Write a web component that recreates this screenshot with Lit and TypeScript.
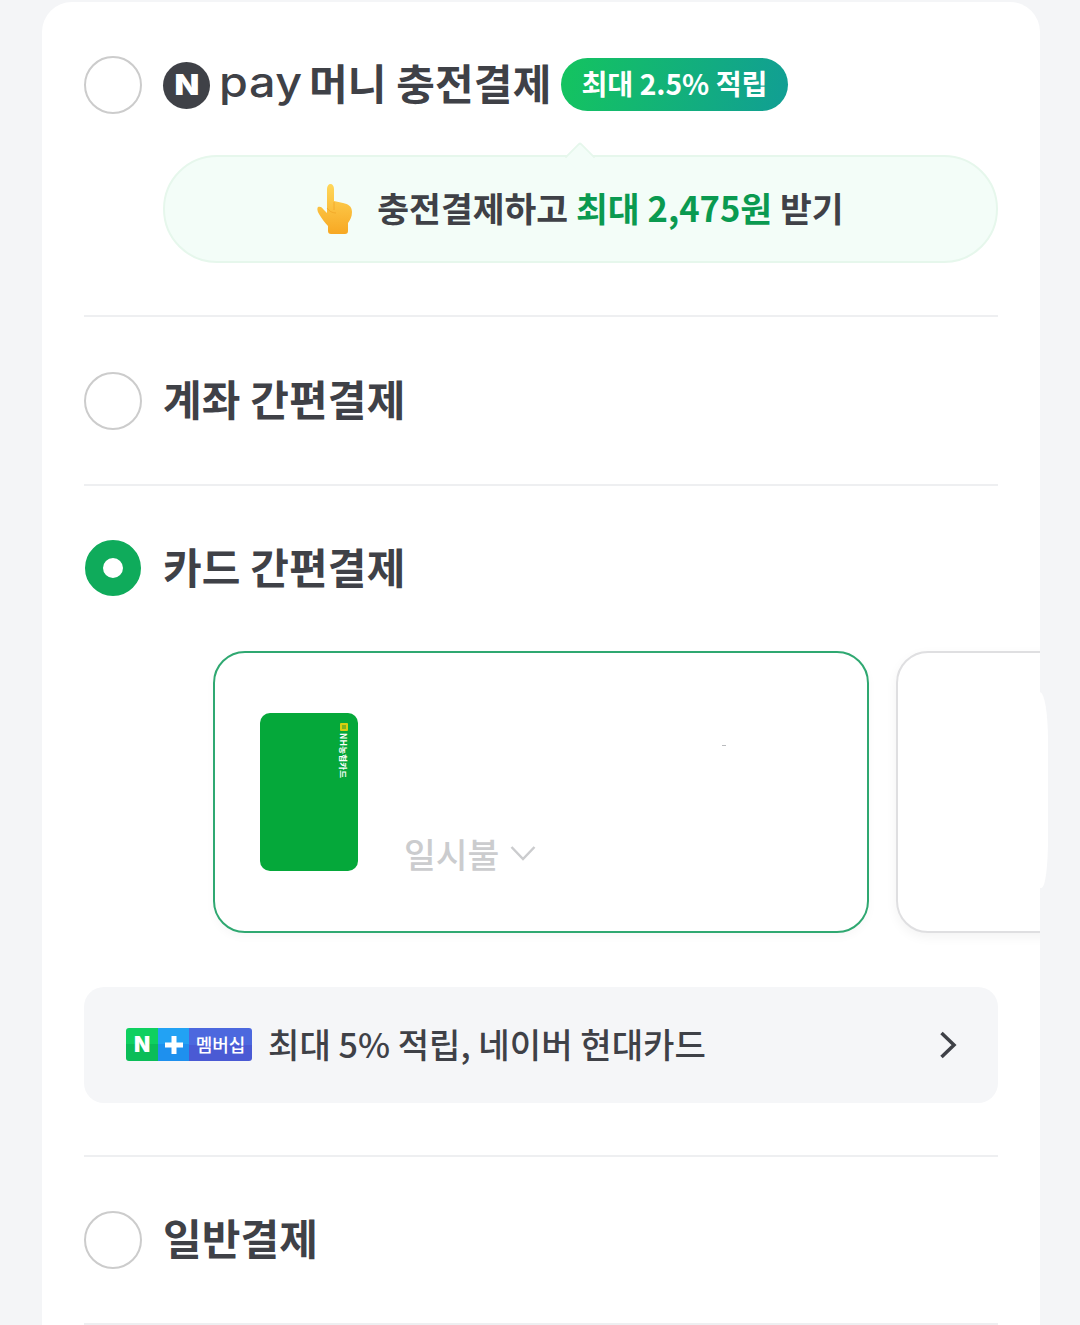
import { LitElement, html, css } from "lit";
import { customElement } from "lit/decorators.js";

@customElement("app-root")
export class AppRoot extends LitElement {
  static styles = css`
    :host {
      display: block;
      position: relative;
      background: #f4f5f7;
      height: 1325px;
      overflow: hidden;
      font-family: "Noto Sans CJK KR", "Noto Sans", sans-serif;
      color: #3f4147;
    }
    .sheet {
      margin: 2px 40px 0 42px;
      padding: 0 42px;
      background: #fff;
      border-radius: 30px 30px 0 0;
      height: 1400px;
      overflow: hidden;
    }
    .blob {
      position: absolute;
      left: 1040px;
      top: 692px;
      width: 8px;
      height: 196px;
      background: #fff;
      border-radius: 0 10px 8px 0 / 0 60px 60px 0;
    }
    .section {
      padding: 54px 0;
      border-bottom: 2px solid #eeeff1;
    }
    .section.first { padding-bottom: 52px; }
    .section.second { padding-top: 55px; }
    .section.cards { padding-bottom: 52px; }
    .row {
      display: flex;
      align-items: center;
      gap: 21px;
      height: 58px;
    }
    .radio {
      flex: none;
      box-sizing: border-box;
      width: 58px;
      height: 58px;
      border-radius: 50%;
      border: 2.5px solid #cccccc;
      background: #fff;
    }
    .radio.on {
      border: 18px solid #0fab5b;
      width: 56px;
      height: 56px;
      margin: 0 1px;
      align-self: flex-start;
    }
    .title {
      font-size: 42px;
      font-weight: 700;
      line-height: 52px;
      padding-bottom: 6px;
      letter-spacing: 0.15px;
      white-space: nowrap;
    }
    .brand { display: flex; align-items: center; }
    .n-logo {
      flex: none;
      width: 47px;
      height: 47px;
      border-radius: 50%;
      background: #3f4147;
      color: #fff;
      display: flex;
      align-items: center;
      justify-content: center;
      font: 900 28px/47px Inter, sans-serif;
      margin-right: 9px;
    }
    .n-logo span { display: block; transform: scaleX(1.15); }
    .pay {
      font: 500 41px/52px Inter, sans-serif;
      letter-spacing: 0.5px;
      width: 71px;
      margin-right: 19px;
      padding-bottom: 6px;
      transform: scaleX(1.14);
      transform-origin: left center;
    }
    .badge {
      flex: none;
      margin-left: -11px;
      height: 53px;
      padding: 0 20px;
      border-radius: 27px;
      background: linear-gradient(100deg, #14c45f, #119e94);
      color: #fff;
      font-size: 28.2px;
      font-weight: 700;
      line-height: 50px;
      white-space: nowrap;
      margin-top: -2px;
    }
    .bubble {
      position: relative;
      box-sizing: border-box;
      height: 108px;
      margin: 41px 0 0 79px;
      border: 2px solid #e6f7ec;
      border-radius: 54px;
      background: #f3fdf8;
      display: flex;
      align-items: center;
      justify-content: center;
      gap: 24px;
      font-size: 34.6px;
      font-weight: 700;
      line-height: 44px;
      white-space: nowrap;
    }
    .bubble-text { padding-bottom: 5px; }
    .tail {
      position: absolute;
      left: 404px;
      top: -11px;
      width: 20px;
      height: 20px;
      background: #f3fdf8;
      border-top: 2px solid #e6f7ec;
      border-left: 2px solid #e6f7ec;
      transform: rotate(45deg);
      border-radius: 3px 0 0 0;
    }
    .hand { flex: none; display: block; }
    .hl { color: #0a9a50; }
    .carousel {
      display: flex;
      gap: 27px;
      margin: 53px -42px 0 129px;
    }
    .pay-card {
      flex: none;
      position: relative;
      box-sizing: border-box;
      width: 656px;
      height: 282px;
      border-radius: 32px;
      border: 2px solid #2fa871;
      background: #fff;
      display: flex;
      align-items: flex-end;
      gap: 46px;
      padding: 0 0 60px 45px;
      box-shadow: 0 4px 10px rgba(0, 0, 0, 0.03);
    }
    .pay-card.next {
      border-color: #dfdfe1;
      box-shadow: 0 4px 12px rgba(0, 0, 0, 0.05);
    }
    .speck {
      position: absolute;
      left: 507px;
      top: 92px;
      width: 4px;
      height: 1px;
      background: #b9bbbe;
    }
    .plastic {
      flex: none;
      position: relative;
      width: 98px;
      height: 158px;
      border-radius: 10px;
      background: #05a83a;
    }
    .nh {
      position: absolute;
      top: 10px;
      right: 10px;
      display: flex;
      flex-direction: column;
      align-items: center;
      gap: 2px;
    }
    .nh-mark {
      box-sizing: border-box;
      width: 8px;
      height: 8px;
      background: #7fb51c;
      border: 2px solid #d8cf10;
      border-radius: 1px;
    }
    .nh-text {
      writing-mode: vertical-rl;
      text-orientation: sideways;
      color: #fff;
      font-size: 8.5px;
      line-height: 9px;
      font-weight: 700;
      letter-spacing: 0.2px;
      white-space: nowrap;
    }
    .plan {
      display: flex;
      align-items: center;
      gap: 11px;
      color: #cbccce;
      font-size: 34.6px;
      font-weight: 500;
      line-height: 38px;
      margin-bottom: -1px;
    }
    .banner {
      box-sizing: border-box;
      height: 116px;
      margin-top: 54px;
      border-radius: 20px;
      background: #f5f6f8;
      display: flex;
      align-items: center;
      padding: 0 41px 0 42px;
      font-size: 34.15px;
      font-weight: 500;
      white-space: nowrap;
    }
    .plus {
      flex: none;
      display: flex;
      height: 33px;
      border-radius: 3px;
      overflow: hidden;
      margin-right: 16px;
      margin-top: -1px;
      color: #fff;
      text-align: center;
    }
    .plus > * { display: flex; align-items: center; justify-content: center; height: 33px; }
    .p1 {
      width: 32px;
      background: linear-gradient(#0fd060 50%, #0bbd58 50%);
      font: 900 21px/33px Inter, sans-serif;
    }
    .p2 { width: 31px; background: linear-gradient(#22a2f4 50%, #1e90ee 50%); }
    .p3 {
      width: 63px;
      background: linear-gradient(#4c68de 50%, #4a5ad4 50%);
      font-size: 18px;
      font-weight: 500;
      line-height: 33px;
      padding-bottom: 1px;
    }
    .banner-text { flex: 1; padding-bottom: 5px; }
    .chev { flex: none; display: block; }
  `;

  private radio(on = false) {
    return html`<div class="radio ${on ? "on" : ""}"></div>`;
  }

  render() {
    return html`
      <div class="sheet">
        <div class="section first">
          <div class="row">
            ${this.radio()}
            <div class="brand">
              <div class="n-logo"><span>N</span></div>
              <div class="pay">pay</div>
              <div class="title">머니 충전결제</div>
            </div>
            <div class="badge">최대 2.5% 적립</div>
          </div>
          <div class="bubble">
            <div class="tail"></div>
            <svg class="hand" width="36" height="50" viewBox="0 0 36 50">
              <defs>
                <linearGradient id="h" x1="0" y1="0" x2="0" y2="1">
                  <stop offset="0" stop-color="#ffd75a" />
                  <stop offset="1" stop-color="#f7a823" />
                </linearGradient>
              </defs>
              <path
                fill="url(#h)"
                d="M10 5c0-3 1.500-5 3.500-5S17 2 17 5v12l9 2c5 1 9 3 9 9 0 5-2 8-4 11v8c0 2-1 3-3 3H14c-2 0-3-1-3-3v-5c-3-3-6-7-9-12-2-3-2-6-1-7 2-1 4 0 6 3l3 3z"
              />
              <path fill="none" stroke="#ec9f20" stroke-width="1" stroke-opacity=".6" d="M17 18v8M10 24c2 3 5 5 9 5" />
            </svg>
            <div class="bubble-text">충전결제하고 <span class="hl">최대 2,475원</span> 받기</div>
          </div>
        </div>

        <div class="section second">
          <div class="row">${this.radio()}<div class="title">계좌 간편결제</div></div>
        </div>

        <div class="section cards">
          <div class="row">${this.radio(true)}<div class="title">카드 간편결제</div></div>
          <div class="carousel">
            <div class="pay-card">
              <div class="plastic">
                <div class="nh">
                  <div class="nh-mark"></div>
                  <div class="nh-text">NH농협카드</div>
                </div>
              </div>
              <div class="plan">
                일시불
                <svg width="26" height="16" viewBox="0 0 26 16">
                  <path d="M1.500 2 13 14 24.500 2" fill="none" stroke="#cbccce" stroke-width="2.500" />
                </svg>
              </div>
              <div class="speck"></div>
            </div>
            <div class="pay-card next"></div>
          </div>
          <div class="banner">
            <div class="plus">
              <span class="p1">N</span>
              <span class="p2">
                <svg width="18" height="18" viewBox="0 0 18 18">
                  <path d="M9 0v18M0 9h18" stroke="#fff" stroke-width="5" fill="none" />
                </svg>
              </span>
              <span class="p3">멤버십</span>
            </div>
            <div class="banner-text">최대 5% 적립, 네이버 현대카드</div>
            <svg class="chev" width="18" height="28" viewBox="0 0 18 28">
              <path d="M2.500 2 15 14 2.500 26" fill="none" stroke="#3f4147" stroke-width="3.500" />
            </svg>
          </div>
        </div>

        <div class="section">
          <div class="row">${this.radio()}<div class="title">일반결제</div></div>
        </div>
      </div>
      <div class="blob"></div>
    `;
  }
}
